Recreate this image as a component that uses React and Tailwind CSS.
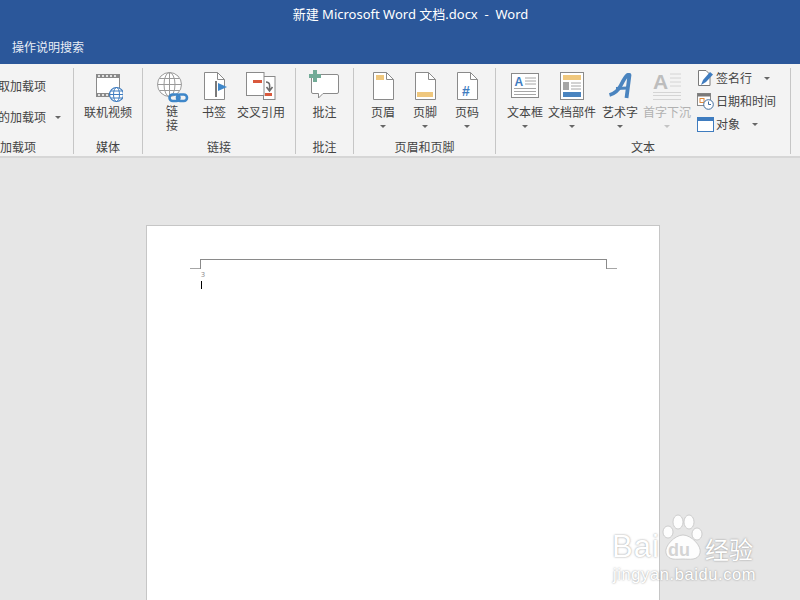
const cjk = "font-['Noto_Sans','Noto_Sans_CJK_SC',sans-serif]";

function Caret({ color = "border-t-[#666666]" }) {
  return <span className={`inline-block w-0 h-0 border-x-[3px] border-x-transparent border-t-[3px] ${color}`} />;
}

// plain document sheet with a folded corner, the header/footer icons share it
function Sheet({ children }) {
  return (
    <svg className="overflow-visible" width="24" height="32" viewBox="0 0 24 32">
      <path d="M2.5 2.5H15.5L22.5 9.5V29.5H2.5Z" fill="#fff" stroke="#8a8a8a" />
      <path d="M15.5 2.5V9.5H22.5" fill="none" stroke="#8a8a8a" />
      {children}
    </svg>
  );
}

function VideoIcon() {
  return (
    <svg width="30" height="34" viewBox="0 0 30 34">
      <rect x="3.5" y="4.5" width="23" height="22" fill="#fff" stroke="#8a8a8a" />
      <rect x="3" y="4" width="24" height="4" fill="#8a8a8a" />
      <rect x="3" y="23" width="24" height="4" fill="#8a8a8a" />
      <path d="M5 6H25M5 25H25" stroke="#fff" strokeWidth="1.5" strokeDasharray="2 2" />
      <circle cx="23.5" cy="24.5" r="7" fill="#fff" stroke="#3f7cbf" strokeWidth="1.2" />
      <ellipse cx="23.5" cy="24.5" rx="3" ry="7" fill="none" stroke="#3f7cbf" />
      <path d="M16.5 24.5H30.5M18 21H29M18 28H29" stroke="#3f7cbf" />
    </svg>
  );
}

function LinkIcon() {
  return (
    <svg width="34" height="34" viewBox="0 0 34 34">
      <circle cx="14.5" cy="14.5" r="12" fill="#fff" stroke="#9a9a9a" />
      <ellipse cx="14.5" cy="14.5" rx="5.5" ry="12" fill="none" stroke="#9a9a9a" />
      <path d="M2.5 14.5H26.5M4.5 8.5H24.5M4.5 20.5H24.5M14.5 2.5V26.5" stroke="#9a9a9a" />
      <rect x="14.5" y="24.5" width="10" height="6.5" rx="3.2" fill="none" stroke="#3f87c9" strokeWidth="2.6" />
      <rect x="22" y="24.5" width="10" height="6.5" rx="3.2" fill="none" stroke="#3f87c9" strokeWidth="2.6" />
    </svg>
  );
}

function BookmarkIcon() {
  return (
    <Sheet>
      <path d="M14 11V27" stroke="#7a7a7a" strokeWidth="2" />
      <path d="M16 13L25 17L16 21Z" fill="#3f87c9" />
    </Sheet>
  );
}

function CrossRefIcon() {
  return (
    <svg width="30" height="32" viewBox="0 0 30 32">
      <rect x="17.5" y="6.5" width="11.5" height="23" fill="#fff" stroke="#8a8a8a" />
      <rect x="0.5" y="2.5" width="17.5" height="23" fill="#fff" stroke="#8a8a8a" />
      <rect x="7" y="10" width="9" height="3" fill="#d9593d" />
      <rect x="19" y="23" width="7" height="3" fill="#d9593d" />
      <path d="M20 12C24 12 24 15 23.5 20M20.5 17L23.5 21L26.5 17" fill="none" stroke="#6b6b6b" strokeWidth="1.6" />
    </svg>
  );
}

function CommentIcon() {
  return (
    <svg width="34" height="30" viewBox="0 0 34 30">
      <path d="M5 4.5H29Q30.5 4.5 30.5 6V22Q30.5 23.5 29 23.5H15L10.5 28V23.5H5Q3.5 23.5 3.5 22V6Q3.5 4.5 5 4.5Z" fill="#fff" stroke="#8a8a8a" />
      <path d="M5 0H9V4H13V8H9V12H5V8H1V4H5Z" fill="#72ab97" />
    </svg>
  );
}

function TextBoxIcon() {
  return (
    <svg width="30" height="30" viewBox="0 0 30 30">
      <rect x="1.5" y="3.5" width="27" height="24" fill="#fff" stroke="#8a8a8a" />
      <text x="4.5" y="16" fontSize="12" fontWeight="700" fill="#3f7cbf" fontFamily="Liberation Sans, sans-serif">A</text>
      <path d="M15 8H26M15 11H26M15 14H26M4 18.5H26M4 21.5H26M4 24.5H26" stroke="#a6a6a6" />
    </svg>
  );
}

function QuickPartsIcon() {
  return (
    <svg width="26" height="32" viewBox="0 0 26 32">
      <rect x="1.5" y="2.5" width="23" height="27" fill="#fff" stroke="#8a8a8a" />
      <rect x="4" y="5" width="18" height="5" fill="#efc77d" />
      <rect x="4" y="12" width="6" height="8" fill="#a6a6a6" />
      <path d="M12 13H22M12 16H22M12 19H22" stroke="#a6a6a6" />
      <rect x="4" y="22" width="18" height="5" fill="#4a84bf" />
    </svg>
  );
}

function WordArtIcon() {
  return (
    <svg width="26" height="32" viewBox="0 0 26 32">
      <path d="M2.5 25Q10 23 14 15T20.5 5L22.5 5L19.5 28" fill="none" stroke="#4a84bf" strokeWidth="3.8" strokeLinejoin="round" />
      <path d="M9 18.5L21 18" stroke="#4a84bf" strokeWidth="3" />
    </svg>
  );
}

function DropCapIcon() {
  return (
    <svg className="overflow-visible" width="30" height="32" viewBox="0 0 30 32">
      <text x="1" y="18.5" fontSize="21" fontWeight="700" fill="#bdbdbd" fontFamily="Liberation Sans, sans-serif">A</text>
      <path d="M18 4H29M18 8H29M18 12H29M18 16H29M1 22.5H29M1 25.5H29M1 29.5H29" stroke="#d4d4d4" />
    </svg>
  );
}

function SignatureIcon() {
  return (
    <svg width="17" height="17" viewBox="0 0 17 17">
      <path d="M1.5 0.5H9L13 4.5V15.5H1.5Z" fill="#fff" stroke="#7a7a7a" />
      <path d="M4 15L6 10L13 2L16 4.5L9 12Z" fill="#3f7cbf" />
    </svg>
  );
}

function DateIcon() {
  return (
    <svg width="17" height="17" viewBox="0 0 17 17">
      <rect x="0.5" y="0.5" width="13" height="12" fill="#fff" stroke="#8a8a8a" />
      <rect x="0.5" y="0.5" width="13" height="3" fill="#7a7a7a" />
      <rect x="3" y="5.5" width="4" height="4" fill="#fff" stroke="#e08a3c" />
      <circle cx="11.5" cy="11.5" r="4.8" fill="#fff" stroke="#3f6f9f" />
      <path d="M11.5 8.5V11.5H14" fill="none" stroke="#3f6f9f" />
    </svg>
  );
}

function ObjectIcon() {
  return (
    <svg width="17" height="15" viewBox="0 0 17 15">
      <rect x="0.5" y="0.5" width="16" height="14" fill="#fff" stroke="#3f7cbf" />
      <rect x="0.5" y="0.5" width="16" height="3.5" fill="#3f7cbf" />
    </svg>
  );
}

function BigButton({ icon, label, w, caret, wrap, disabled }) {
  return (
    <div className={`flex flex-col items-center ${w}`}>
      <div className="h-[35px] flex items-start justify-center">{icon}</div>
      <div className={`text-center ${wrap ? "w-[12px] leading-[14px]" : "leading-[16px] whitespace-nowrap"} ${disabled ? "text-[#b1b1b1]" : ""}`}>{label}</div>
      {caret && (
        <div className="h-[10px] flex items-center">
          <Caret color={disabled ? "border-t-[#c4c4c4]" : "border-t-[#666666]"} />
        </div>
      )}
    </div>
  );
}

function Group({ w, label, pad, labelClass, children }) {
  return (
    <div className={`${w} h-[86px] shrink-0 flex flex-col border-r border-[#c6c6c6]`}>
      <div className={`flex h-[72px] shrink-0 pt-[2px] ${pad || ""}`}>{children}</div>
      <div className={`h-[14px] leading-[16px] whitespace-nowrap ${labelClass || "text-center"}`}>{label}</div>
    </div>
  );
}

function SmallRow({ icon, label, caret }) {
  return (
    <div className="h-[23px] shrink-0 flex items-center gap-[2px]">
      <div className="w-[17px] flex justify-center">{icon}</div>
      <span className="whitespace-nowrap">{label}</span>
      {caret && <span className="ml-[10px] flex"><Caret /></span>}
    </div>
  );
}

function Watermark() {
  return (
    <div className="absolute left-[612px] top-[512px] w-[146px] h-[74px] text-white [text-shadow:0_0_2px_rgba(70,70,70,0.6)] pointer-events-none">
      <svg className="absolute left-[50px] top-[2px]" width="50" height="50" viewBox="0 0 50 50">
        <g fill="#ffffff" fillOpacity="0.9" stroke="#bdbdbd" strokeWidth="0.7">
          <ellipse cx="6" cy="18" rx="5" ry="6" />
          <ellipse cx="16" cy="8" rx="5" ry="7" />
          <ellipse cx="27" cy="8" rx="5" ry="7" />
          <ellipse cx="35" cy="20" rx="5" ry="6" />
          <path d="M21 21C29 21 40 32 38 39C36 47 27 45 21 45C15 45 6 47 4 39C2 32 13 21 21 21Z" />
        </g>
      </svg>
      <div className="absolute left-0 top-[19px] text-[31px] leading-[32px] font-['Liberation_Sans',sans-serif] tracking-[1px]">Bai</div>
      <div className="absolute left-[56px] top-[28px] text-[18px] leading-[20px] font-bold text-[#d4d4d4] font-['Liberation_Sans',sans-serif] [text-shadow:none]">du</div>
      <div className="absolute left-[93px] top-[24px] text-[24px] leading-[26px] font-['Noto_Sans_CJK_SC',sans-serif]">经验</div>
      <div className="absolute left-[1px] top-[52px] text-[16.5px] leading-[20px] whitespace-nowrap font-['Liberation_Sans',sans-serif] tracking-[0.6px]">jingyan.baidu.com</div>
    </div>
  );
}

export default function App() {
  return (
    <div className={`relative w-[800px] h-[600px] overflow-hidden flex flex-col bg-[#e6e6e6] text-[12px] text-[#444444] ${cjk}`}>
      {/* title bar */}
      <div className="h-[31px] shrink-0 bg-[#2b579a] text-white flex items-center justify-center pl-[21px] pb-[2px] text-[13px] whitespace-pre">
        新建 Microsoft Word 文档.docx  -  Word
      </div>
      <div className="h-[33px] shrink-0 bg-[#2b579a] text-[#e9eef6] pl-[12px] flex items-center leading-none">
        操作说明搜索
      </div>

      {/* ribbon */}
      <div className="h-[94px] shrink-0 bg-[#f3f3f3] border-b-2 border-[#d6d6d6] pt-[4px] flex">
        <Group w="w-[74px]" label="加载项" labelClass="text-right pr-[41px]">
          <div className="flex flex-col w-full pt-[1px]">
            <div className="h-[31px] flex items-center justify-end pr-[27px] whitespace-nowrap">获取加载项</div>
            <div className="h-[31px] flex items-center justify-end pr-[12px] gap-[9px] whitespace-nowrap">
              我的加载项
              <Caret />
            </div>
          </div>
        </Group>
        <Group w="w-[69px]" label="媒体">
          <BigButton w="w-full" icon={<VideoIcon />} label="联机视频" />
        </Group>
        <Group w="w-[153px]" label="链接" pad="pl-[8px]">
          <BigButton w="w-[42px]" icon={<LinkIcon />} label="链接" wrap />
          <BigButton w="w-[42px]" icon={<BookmarkIcon />} label="书签" />
          <BigButton w="w-[52px]" icon={<CrossRefIcon />} label="交叉引用" />
        </Group>
        <Group w="w-[58px]" label="批注">
          <BigButton w="w-full" icon={<CommentIcon />} label="批注" />
        </Group>
        <Group w="w-[142px]" label="页眉和页脚" pad="pl-[8px]">
          <BigButton w="w-[42px]" caret label="页眉" icon={<Sheet><rect x="5" y="5" width="8" height="5" fill="#efc77d" /></Sheet>} />
          <BigButton w="w-[42px]" caret label="页脚" icon={<Sheet><rect x="4" y="22" width="16" height="5" fill="#efc77d" /></Sheet>} />
          <BigButton w="w-[42px]" caret label="页码" icon={<Sheet><text x="7" y="26" fontSize="14" fontWeight="700" fill="#3f7cbf" fontFamily="Liberation Sans, sans-serif">#</text></Sheet>} />
        </Group>
        <Group w="w-[295px]" label="文本" pad="pl-[5px]">
          <BigButton w="w-[48px]" caret label="文本框" icon={<TextBoxIcon />} />
          <BigButton w="w-[46px]" caret label="文档部件" icon={<QuickPartsIcon />} />
          <BigButton w="w-[50px]" caret label="艺术字" icon={<WordArtIcon />} />
          <BigButton w="w-[44px]" caret disabled label="首字下沉" icon={<DropCapIcon />} />
          <div className="ml-[8px] -mt-[3px] flex flex-col">
            <SmallRow icon={<SignatureIcon />} label="签名行" caret />
            <SmallRow icon={<DateIcon />} label="日期和时间" />
            <SmallRow icon={<ObjectIcon />} label="对象" caret />
          </div>
        </Group>
      </div>

      {/* document canvas */}
      <div className="flex-1 min-h-0 overflow-hidden pl-[146px] pt-[67px]">
        <div className="w-[514px] h-[400px] bg-white border border-b-0 border-[#c6c6c6] pl-[43px] pt-[33px]">
          <div className="flex items-end">
            <div className="w-[10px] h-[10px] border-b border-[#a6a6a6]" />
            <div className="w-[407px] h-[10px] border border-b-0 border-[#8a8a8a]" />
            <div className="w-[10px] h-[10px] border-b border-[#a6a6a6]" />
          </div>
          <div className="pl-[11px]">
            <div className="h-[9px] pt-[3px] text-[7px] leading-[6px] text-[#888888]">3</div>
            <div className="mt-[3px] w-px h-[8px] bg-black" />
          </div>
        </div>
      </div>

      <Watermark />
    </div>
  );
}
